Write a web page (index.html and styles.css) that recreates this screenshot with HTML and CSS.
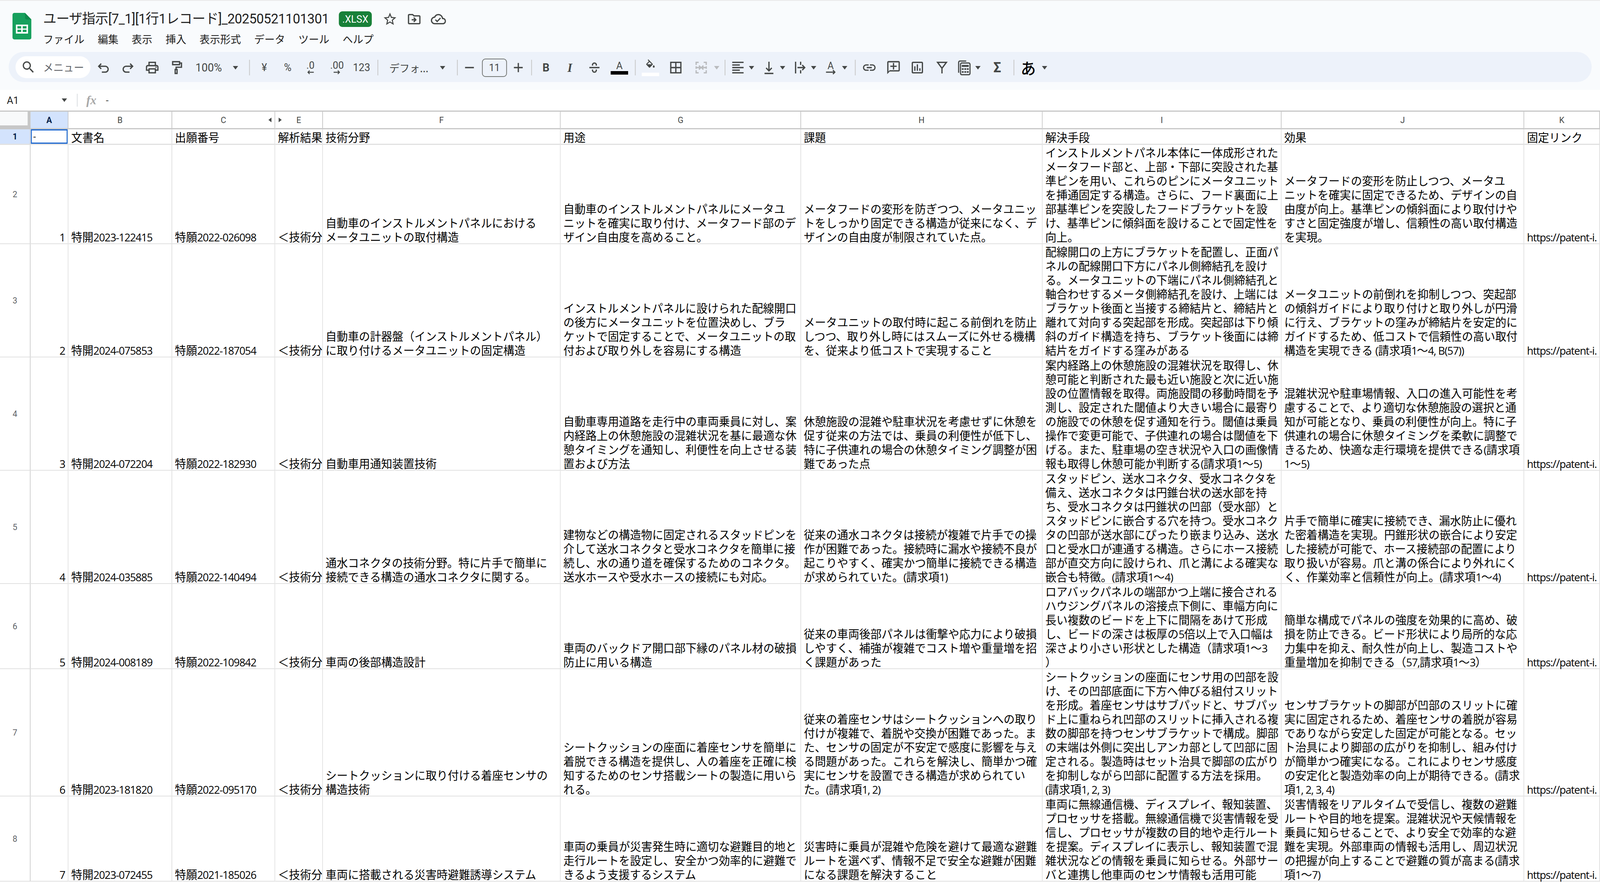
FILE: index.html
```html
<!DOCTYPE html>
<html lang="ja">
<head>
<meta charset="utf-8">
<title>ユーザ指示 - Sheets</title>
<link rel="stylesheet" href="styles.css">
</head>
<body>
<div class="app">
  <header class="head">
    <div class="top">
      <svg class="logo" viewBox="0 0 50 68"><path d="M5 0H33L50 17V63a5 5 0 0 1-5 5H5a5 5 0 0 1-5-5V5a5 5 0 0 1 5-5z" fill="#17a05d"/><path d="M33 0L50 17H38a5 5 0 0 1-5-5z" fill="#0f8a4c"/><path d="M9 30H41V53H9z" fill="#fff"/><path d="M13 34H23V40H13zM27 34H37V40H27zM13 43H23V49H13zM27 43H37V49H27z" fill="#17a05d"/></svg>
      <div class="titlecol">
        <div class="titlerow">
          <h1 class="title">ユーザ指示[7_1][1行1レコード]_20250521101301</h1>
          <span class="badge">.XLSX</span>
          <svg class="ic star" viewBox="0 0 24 24"><path d="M22 9.24l-7.19-.62L12 2 9.19 8.63 2 9.24l5.46 4.73L5.82 21 12 17.27 18.18 21l-1.63-7.03L22 9.24zM12 15.4l-3.76 2.27 1-4.28-3.32-2.88 4.38-.38L12 6.1l1.71 4.04 4.38.38-3.32 2.88 1 4.28L12 15.4z"/></svg>
          <svg class="ic mv" viewBox="0 0 24 24"><path d="M20 6h-8l-2-2H4c-1.1 0-2 .9-2 2v12c0 1.1.9 2 2 2h16c1.1 0 2-.9 2-2V8c0-1.1-.9-2-2-2zm0 12H4V6h5.17l2 2H20v10zM12.16 14l-1.6 1.59L12 17l4-4-4-4-1.42 1.41L12.16 12H8v2h4.16z"/></svg>
          <svg class="ic cl" viewBox="0 0 24 24"><path d="M19.35 10.04C18.67 6.59 15.64 4 12 4 9.11 4 6.6 5.64 5.35 8.04 2.34 8.36 0 10.91 0 14c0 3.31 2.69 6 6 6h13c2.76 0 5-2.24 5-5 0-2.64-2.05-4.78-4.65-4.96zM19 18H6c-2.21 0-4-1.79-4-4 0-2.05 1.53-3.76 3.56-3.97l1.07-.11.5-.95C8.08 7.14 9.94 6 12 6c2.62 0 4.88 1.86 5.39 4.43l.3 1.5 1.53.11c1.56.1 2.78 1.41 2.78 2.96 0 1.65-1.35 3-3 3zm-9-3.82l-2.09-2.09L6.5 13.5 10 17l6.01-6.01-1.41-1.41z"/></svg>
        </div>
        <nav class="menu"><span>ファイル</span><span>編集</span><span>表示</span><span>挿入</span><span>表示形式</span><span>データ</span><span>ツール</span><span>ヘルプ</span></nav>
      </div>
    </div>
    <div class="toolbar">
      <div class="search"><svg class="ic" viewBox="0 0 24 24"><path d="M15.5 14h-.79l-.28-.27C15.41 12.59 16 11.11 16 9.5 16 5.91 13.09 3 9.5 3S3 5.91 3 9.5 5.91 16 9.5 16c1.61 0 3.09-.59 4.23-1.57l.27.28v.79l5 4.99L20.49 19l-4.99-5zm-6 0C7.01 14 5 11.99 5 9.5S7.01 5 9.5 5 14 7.01 14 9.5 11.99 14 9.5 14z"/></svg><span>メニュー</span></div>
      <div class="b w64"><svg class="ic st" viewBox="0 0 24 24"><path d="M8 6L4 10l4 4M4 10h10.5a4.5 4.5 0 0 1 0 9H9"/></svg></div>
      <div class="b w62"><svg class="ic st" viewBox="0 0 24 24"><path d="M16 6l4 4-4 4M20 10H9.5a4.5 4.5 0 0 0 0 9H15"/></svg></div>
      <div class="b w68"><svg class="ic" viewBox="0 0 24 24"><path d="M19 8h-1V3H6v5H5c-1.66 0-3 1.34-3 3v6h4v4h12v-4h4v-6c0-1.66-1.34-3-3-3zM8 5h8v3H8V5zm8 12v2H8v-4h8v2zm2-2v-2H6v2H4v-4c0-.55.45-1 1-1h14c.55 0 1 .45 1 1v4h-2z"/><circle cx="18" cy="11.5" r="1"/></svg></div>
      <div class="b w60"><svg class="ic st" viewBox="0 0 24 24"><path d="M6 3h11v4.5H6zM17 5h3v6.5h-8.5V15M10 15h3v6h-3z"/></svg></div>
      <div class="zoomsel"><span>100%</span><i class="caret"></i></div>
      <i class="sep"></i>
      <div class="b w62 tx">¥</div>
      <div class="b w62 tx">%</div>
      <div class="b w58 dec"><span>.0</span><svg viewBox="0 0 20 10"><path d="M18 5H4M8 1L4 5l4 4"/></svg></div>
      <div class="b w82 dec"><span>.00</span><svg viewBox="0 0 20 10"><path d="M2 5h14M12 1l4 4-4 4"/></svg></div>
      <div class="b w48 tx tx123">123</div>
      <i class="sep"></i>
      <div class="fontsel"><span>デフォ...</span><i class="caret"></i></div>
      <i class="sep"></i>
      <div class="b w48"><svg class="ic st" viewBox="0 0 24 24"><path d="M5 12h14"/></svg></div>
      <div class="size">11</div>
      <div class="b w54 plus"><svg class="ic st" viewBox="0 0 24 24"><path d="M5 12h14M12 5v14"/></svg></div>
      <i class="sep"></i>
      <div class="b w60 lt-b">B</div>
      <div class="b w66 lt-i">I</div>
      <div class="b w64"><svg class="ic st" viewBox="0 0 24 24"><path d="M4 12h16M9 9V8a3 3 0 0 1 6 0v1M9 15v1a3 3 0 0 0 6 0v-1"/></svg></div>
      <div class="b w68 color"><span>A</span><i class="bar black"></i></div>
      <i class="sep"></i>
      <div class="b w64 color"><svg class="fillic" viewBox="0 0 24 24"><path d="M16.56 8.94L7.62 0 6.21 1.41l2.38 2.38-5.15 5.15c-.59.59-.59 1.54 0 2.12l5.5 5.5c.29.29.68.44 1.06.44s.77-.15 1.06-.44l5.5-5.5c.59-.58.59-1.53 0-2.12zM5.21 10L10 5.21 14.79 10H5.21zM19 11.5s-2 2.17-2 3.5c0 1.1.9 2 2 2s2-.9 2-2c0-1.33-2-3.5-2-3.5z"/></svg><i class="bar white"></i></div>
      <div class="b w70"><svg class="ic" viewBox="0 0 24 24"><path d="M3 3v18h18V3H3zm8 16H5v-6h6v6zm0-8H5V5h6v6zm8 8h-6v-6h6v6zm0-8h-6V5h6v6z"/></svg></div>
      <div class="b w64"><svg class="ic st off" viewBox="0 0 24 24"><path d="M8 4H4v4M4 10v4M4 16v4h4M16 4h4v4M20 10v4M20 16v4h-4M5 12h6M8.5 9l3 3-3 3M19 12h-6M15.5 9l-3 3 3 3"/></svg></div>
      <div class="b w23"><i class="caret off"></i></div>
      <i class="sep"></i>
      <div class="drop"><span class="dico"><svg class="ic" viewBox="0 0 24 24"><path d="M15 15H3v2h12v-2zm0-8H3v2h12V7zM3 13h18v-2H3v2zm0 8h18v-2H3v2zM3 3v2h18V3H3z"/></svg></span><i class="caret"></i></div>
      <div class="drop"><span class="dico"><svg class="ic st" viewBox="0 0 24 24"><path d="M12 3v14M7.5 12.5L12 17l4.500-4.500M5 21h14"/></svg></span><i class="caret"></i></div>
      <div class="drop"><span class="dico"><svg class="ic st" viewBox="0 0 24 24"><path d="M5 3v18M13 3v5M13 16v5M8 12h11M15.500 8l4 4-4 4"/></svg></span><i class="caret"></i></div>
      <div class="drop"><span class="dico"><svg class="ic" viewBox="0 0 24 24"><text x="6.500" y="14.500" class="rot">A</text><path class="arrow" d="M4 19h14M15 16l3 3-3 3"/></svg></span><i class="caret"></i></div>
      <i class="sep"></i>
      <div class="b w58"><svg class="ic" viewBox="0 0 24 24"><path d="M3.900 12c0-1.710 1.390-3.100 3.100-3.100h4V7H7c-2.760 0-5 2.240-5 5s2.240 5 5 5h4v-1.900H7c-1.710 0-3.100-1.390-3.100-3.100zM8 13h8v-2H8v2zm9-6h-4v1.900h4c1.710 0 3.100 1.390 3.100 3.100s-1.390 3.100-3.100 3.100h-4V17h4c2.760 0 5-2.240 5-5s-2.240-5-5-5z"/></svg></div>
      <div class="b w70"><svg class="ic" viewBox="0 0 24 24"><path d="M20 2H4c-1.100 0-2 .9-2 2v18l4-4h14c1.100 0 2-.9 2-2V4c0-1.100-.9-2-2-2zm0 14H6l-2 2V4h16v12z"/><path d="M13 5h-2v4H7v2h4v4h2v-4h4V9h-4z"/></svg></div>
      <div class="b w56"><svg class="ic" viewBox="0 0 24 24"><path d="M19 3H5c-1.100 0-2 .9-2 2v14c0 1.100.9 2 2 2h14c1.100 0 2-.9 2-2V5c0-1.100-.9-2-2-2zm0 16H5V5h14v14zM7 10h2v7H7zM11 7h2v10h-2zM15 13h2v4h-2z"/></svg></div>
      <div class="b w66 filt"><svg class="ic st" viewBox="0 0 24 24"><path d="M5 4h14l-7 9zM12 13v8"/></svg></div>
      <div class="drop"><span class="dico"><svg class="ic" viewBox="0 0 24 24"><path class="calc" d="M3 20V4a2 2 0 0 1 2-2h10"/><rect class="calc" x="6" y="5" width="15" height="18" rx="2"/><path d="M8 8h11v3H8zM8 13h3v2.500H8zM12 13h3v2.500h-3zM16 13h3v2.500h-3zM8 17.500h3V20H8zM12 17.500h3V20h-3zM16 17.500h3V20h-3z"/></svg></span><i class="caret"></i></div>
      <div class="b w62 sigma">Σ</div>
      <i class="sep"></i>
      <div class="b w60 kana">あ</div>
      <div class="b w26"><i class="caret"></i></div>
    </div>
  </header>
  <div class="fbar">
    <div class="namebox"><span>A1</span><i class="caret"></i></div>
    <i class="fsep"></i>
    <span class="fx">fx</span>
    <span class="fval">-</span>
  </div>
  <div class="grid">
    <table class="sheet">
      <colgroup><col class="ch"><col class="ca"><col class="cb"><col class="cc"><col class="ce"><col class="cf"><col class="cg"><col class="ch2"><col class="ci"><col class="cj"><col class="ck"></colgroup>
      <thead>
        <tr>
          <th class="corner"></th><th class="sel">A</th><th>B</th><th class="rel">C<i class="hide-l"></i></th><th class="rel"><i class="hide-r"></i>E</th><th>F</th><th>G</th><th>H</th><th>I</th><th>J</th><th>K</th>
        </tr>
      </thead>
      <tbody>
        <tr class="r1"><th class="rh rsel">1</th><td class="active">-</td><td>文書名</td><td>出願番号</td><td>解析結果</td><td>技術分野</td><td>用途</td><td>課題</td><td>解決手段</td><td>効果</td><td>固定リンク</td></tr>
        <tr><th class="rh">2</th><td class="n"><span class="lat">1</span></td><td>特開<span class="lat">2023-122415</span></td><td>特願<span class="lat">2022-026098</span></td><td>＜技術分</td>
          <td>自動車のインストルメントパネルにおける<br>メータユニットの取付構造</td>
          <td>自動車のインストルメントパネルにメータユ<br>ニットを確実に取り付け、メータフード部のデ<br>ザイン自由度を高めること。</td>
          <td>メータフードの変形を防ぎつつ、メータユニッ<br>トをしっかり固定できる構造が従来になく、デ<br>ザインの自由度が制限されていた点。</td>
          <td>インストルメントパネル本体に一体成形された<br>メータフード部と、上部・下部に突設された基<br>準ピンを用い、これらのピンにメータユニット<br>を挿通固定する構造。さらに、フード裏面に上<br>部基準ピンを突設したフードブラケットを設<br>け、基準ピンに傾斜面を設けることで固定性を<br>向上。</td>
          <td>メータフードの変形を防止しつつ、メータユ<br>ニットを確実に固定できるため、デザインの自<br>由度が向上。基準ピンの傾斜面により取付けや<br>すさと固定強度が増し、信頼性の高い取付構造<br>を実現。</td>
          <td class="url"><span class="lat">https://patent-i.</span></td></tr>
        <tr><th class="rh">3</th><td class="n"><span class="lat">2</span></td><td>特開<span class="lat">2024-075853</span></td><td>特願<span class="lat">2022-187054</span></td><td>＜技術分</td>
          <td>自動車の計器盤（インストルメントパネル）<br>に取り付けるメータユニットの固定構造</td>
          <td>インストルメントパネルに設けられた配線開口<br>の後方にメータユニットを位置決めし、ブラ<br>ケットで固定することで、メータユニットの取<br>付および取り外しを容易にする構造</td>
          <td>メータユニットの取付時に起こる前倒れを防止<br>しつつ、取り外し時にはスムーズに外せる機構<br>を、従来より低コストで実現すること</td>
          <td>配線開口の上方にブラケットを配置し、正面パ<br>ネルの配線開口下方にパネル側締結孔を設け<br>る。メータユニットの下端にパネル側締結孔と<br>軸合わせするメータ側締結孔を設け、上端には<br>ブラケット後面と当接する締結片と、締結片と<br>離れて対向する突起部を形成。突起部は下り傾<br>斜のガイド構造を持ち、ブラケット後面には締<br>結片をガイドする窪みがある</td>
          <td>メータユニットの前倒れを抑制しつつ、突起部<br>の傾斜ガイドにより取り付けと取り外しが円滑<br>に行え、ブラケットの窪みが締結片を安定的に<br>ガイドするため、低コストで信頼性の高い取付<br>構造を実現できる <span class="lat">(</span>請求項<span class="lat">1</span>〜<span class="lat">4, B(57))</span></td>
          <td class="url"><span class="lat">https://patent-i.</span></td></tr>
        <tr><th class="rh">4</th><td class="n"><span class="lat">3</span></td><td>特開<span class="lat">2024-072204</span></td><td>特願<span class="lat">2022-182930</span></td><td>＜技術分</td>
          <td>自動車用通知装置技術</td>
          <td>自動車専用道路を走行中の車両乗員に対し、案<br>内経路上の休憩施設の混雑状況を基に最適な休<br>憩タイミングを通知し、利便性を向上させる装<br>置および方法</td>
          <td>休憩施設の混雑や駐車状況を考慮せずに休憩を<br>促す従来の方法では、乗員の利便性が低下し、<br>特に子供連れの場合の休憩タイミング調整が困<br>難であった点</td>
          <td>案内経路上の休憩施設の混雑状況を取得し、休<br>憩可能と判断された最も近い施設と次に近い施<br>設の位置情報を取得。両施設間の移動時間を予<br>測し、設定された閾値より大きい場合に最寄り<br>の施設での休憩を促す通知を行う。閾値は乗員<br>操作で変更可能で、子供連れの場合は閾値を下<br>げる。また、駐車場の空き状況や入口の画像情<br>報も取得し休憩可能か判断する<span class="lat">(</span>請求項<span class="lat">1</span>〜<span class="lat">5)</span></td>
          <td>混雑状況や駐車場情報、入口の進入可能性を考<br>慮することで、より適切な休憩施設の選択と通<br>知が可能となり、乗員の利便性が向上。特に子<br>供連れの場合に休憩タイミングを柔軟に調整で<br>きるため、快適な走行環境を提供できる<span class="lat">(</span>請求項<br><span class="lat">1</span>〜<span class="lat">5)</span></td>
          <td class="url"><span class="lat">https://patent-i.</span></td></tr>
        <tr><th class="rh">5</th><td class="n"><span class="lat">4</span></td><td>特開<span class="lat">2024-035885</span></td><td>特願<span class="lat">2022-140494</span></td><td>＜技術分</td>
          <td>通水コネクタの技術分野。特に片手で簡単に<br>接続できる構造の通水コネクタに関する。</td>
          <td>建物などの構造物に固定されるスタッドピンを<br>介して送水コネクタと受水コネクタを簡単に接<br>続し、水の通り道を確保するためのコネクタ。<br>送水ホースや受水ホースの接続にも対応。</td>
          <td>従来の通水コネクタは接続が複雑で片手での操<br>作が困難であった。接続時に漏水や接続不良が<br>起こりやすく、確実かつ簡単に接続できる構造<br>が求められていた。<span class="lat">(</span>請求項<span class="lat">1)</span></td>
          <td>スタッドピン、送水コネクタ、受水コネクタを<br>備え、送水コネクタは円錐台状の送水部を持<br>ち、受水コネクタは円錐状の凹部（受水部）と<br>スタッドピンに嵌合する穴を持つ。受水コネク<br>タの凹部が送水部にぴったり嵌まり込み、送水<br>口と受水口が連通する構造。さらにホース接続<br>部が直交方向に設けられ、爪と溝による確実な<br>嵌合も特徴。<span class="lat">(</span>請求項<span class="lat">1</span>〜<span class="lat">4)</span></td>
          <td>片手で簡単に確実に接続でき、漏水防止に優れ<br>た密着構造を実現。円錐形状の嵌合により安定<br>した接続が可能で、ホース接続部の配置により<br>取り扱いが容易。爪と溝の係合により外れにく<br>く、作業効率と信頼性が向上。<span class="lat">(</span>請求項<span class="lat">1</span>〜<span class="lat">4)</span></td>
          <td class="url"><span class="lat">https://patent-i.</span></td></tr>
        <tr><th class="rh">6</th><td class="n"><span class="lat">5</span></td><td>特開<span class="lat">2024-008189</span></td><td>特願<span class="lat">2022-109842</span></td><td>＜技術分</td>
          <td>車両の後部構造設計</td>
          <td>車両のバックドア開口部下縁のパネル材の破損<br>防止に用いる構造</td>
          <td>従来の車両後部パネルは衝撃や応力により破損<br>しやすく、補強が複雑でコスト増や重量増を招<br>く課題があった</td>
          <td>ロアバックパネルの端部かつ上端に接合される<br>ハウジングパネルの溶接点下側に、車幅方向に<br>長い複数のビードを上下に間隔をあけて形成<br>し、ビードの深さは板厚の<span class="lat">5</span>倍以上で入口幅は<br>深さより小さい形状とした構造（請求項<span class="lat">1</span>〜<span class="lat">3</span><br>）</td>
          <td>簡単な構成でパネルの強度を効果的に高め、破<br>損を防止できる。ビード形状により局所的な応<br>力集中を抑え、耐久性が向上し、製造コストや<br>重量増加を抑制できる（<span class="lat">57,</span>請求項<span class="lat">1</span>〜<span class="lat">3</span>）</td>
          <td class="url"><span class="lat">https://patent-i.</span></td></tr>
        <tr><th class="rh">7</th><td class="n"><span class="lat">6</span></td><td>特開<span class="lat">2023-181820</span></td><td>特願<span class="lat">2022-095170</span></td><td>＜技術分</td>
          <td>シートクッションに取り付ける着座センサの<br>構造技術</td>
          <td>シートクッションの座面に着座センサを簡単に<br>着脱できる構造を提供し、人の着座を正確に検<br>知するためのセンサ搭載シートの製造に用いら<br>れる。</td>
          <td>従来の着座センサはシートクッションへの取り<br>付けが複雑で、着脱や交換が困難であった。ま<br>た、センサの固定が不安定で感度に影響を与え<br>る問題があった。これらを解決し、簡単かつ確<br>実にセンサを設置できる構造が求められてい<br>た。<span class="lat">(</span>請求項<span class="lat">1, 2)</span></td>
          <td>シートクッションの座面にセンサ用の凹部を設<br>け、その凹部底面に下方へ伸びる組付スリット<br>を形成。着座センサはサブパッドと、サブパッ<br>ド上に重ねられ凹部のスリットに挿入される複<br>数の脚部を持つセンサブラケットで構成。脚部<br>の末端は外側に突出しアンカ部として凹部に固<br>定される。製造時はセット治具で脚部の広がり<br>を抑制しながら凹部に配置する方法を採用。<br><span class="lat">(</span>請求項<span class="lat">1, 2, 3)</span></td>
          <td>センサブラケットの脚部が凹部のスリットに確<br>実に固定されるため、着座センサの着脱が容易<br>でありながら安定した固定が可能となる。セッ<br>ト治具により脚部の広がりを抑制し、組み付け<br>が簡単かつ確実になる。これによりセンサ感度<br>の安定化と製造効率の向上が期待できる。<span class="lat">(</span>請求<br>項<span class="lat">1, 2, 3, 4)</span></td>
          <td class="url"><span class="lat">https://patent-i.</span></td></tr>
        <tr><th class="rh">8</th><td class="n"><span class="lat">7</span></td><td>特開<span class="lat">2023-072455</span></td><td>特願<span class="lat">2021-185026</span></td><td>＜技術分</td>
          <td>車両に搭載される災害時避難誘導システム</td>
          <td>車両の乗員が災害発生時に適切な避難目的地と<br>走行ルートを設定し、安全かつ効率的に避難で<br>きるよう支援するシステム</td>
          <td>災害時に乗員が混雑や危険を避けて最適な避難<br>ルートを選べず、情報不足で安全な避難が困難<br>になる課題を解決すること</td>
          <td>車両に無線通信機、ディスプレイ、報知装置、<br>プロセッサを搭載。無線通信機で災害情報を受<br>信し、プロセッサが複数の目的地や走行ルート<br>を提案。ディスプレイに表示し、報知装置で混<br>雑状況などの情報を乗員に知らせる。外部サー<br>バと連携し他車両のセンサ情報も活用可能</td>
          <td>災害情報をリアルタイムで受信し、複数の避難<br>ルートや目的地を提案。混雑状況や天候情報を<br>乗員に知らせることで、より安全で効率的な避<br>難を実現。外部車両の情報も活用し、周辺状況<br>の把握が向上することで避難の質が高まる<span class="lat">(</span>請求<br>項<span class="lat">1</span>〜<span class="lat">7)</span></td>
          <td class="url"><span class="lat">https://patent-i.</span></td></tr>
      </tbody>
    </table>
  </div>
</div>
<script src="fit.js"></script>
</body>
</html>
```
FILE: styles.css
```css
* { box-sizing: border-box; }
html, body { margin: 0; padding: 0; background: #fff; overflow: hidden; }
body { font-family: "Noto Sans CJK JP", sans-serif; color: #000; }
.app { width: 4226px; height: 2258px; overflow: hidden; background: #fff; transform: scaleX(var(--fit, 1)); transform-origin: 0 0; }

.head { height: 230px; background: #f9fbfd; border-top: 2px solid #e9e9e9; }
.top { display: flex; height: 131px; padding-left: 33px; }
.logo { width: 50px; height: 68px; margin-top: 31px; flex: none; }
.titlecol { margin-left: 31px; }
.titlerow { display: flex; align-items: center; height: 40px; margin-top: 27px; }
.title { margin: 0; font: 400 35px/40px Roboto, "Noto Sans CJK JP", sans-serif; letter-spacing: -0.5px; color: #1f1f1f; white-space: nowrap; }
.badge { margin-left: 26px; width: 87px; height: 40px; background: #188038; color: #fff; border-radius: 9px; font: 400 26px/40px Roboto, sans-serif; text-align: center; }
.star { margin-left: 28px; }
.mv, .cl { margin-left: 24px; }
.ic { width: 40px; height: 40px; fill: #444746; flex: none; }
.st { fill: none; stroke: #444746; stroke-width: 2; }
.off { stroke: #b9bbbe; }
.menu { display: flex; gap: 35px; margin-top: 12px; font-size: 27.300px; line-height: 36px; color: #1f1f1f; }

.toolbar { display: flex; align-items: center; height: 77px; margin: 0 22px 0 23px; padding: 3px 0 0 18px; background: #edf2fa; border-radius: 38px; color: #444746; }
.search { width: 198px; height: 56px; margin-right: 3px; flex: none; background: #fff; border-radius: 28px; display: flex; align-items: center; padding-left: 14px; margin-top: -3px; font-size: 27px; color: #5f6368; gap: 19px; }
.search span { white-space: nowrap; }
.b { display: flex; align-items: center; justify-content: center; flex: none; height: 60px; }
.w23 { width: 23px; justify-content: flex-start; padding-left: 2px; }
.w26 { width: 26px; }
.w48 { width: 48px; }
.w54 { width: 54px; }
.w56 { width: 56px; }
.w58 { width: 58px; }
.w60 { width: 60px; }
.w62 { width: 62px; }
.w64 { width: 64px; }
.w66 { width: 66px; }
.w68 { width: 68px; }
.w70 { width: 70px; }
.w82 { width: 82px; }
.plus { margin-left: 3px; }
.filt { margin-left: 4px; }
.sigma { margin-right: 5px; font: 700 36px Roboto, sans-serif; }
.tx { font: 400 27px Roboto, sans-serif; }
.tx123 { margin-right: 11px; }
.dec { flex-direction: column; font: 400 26px/24px Roboto, sans-serif; }
.dec svg { width: 22px; height: 12px; fill: none; stroke: #444746; stroke-width: 2.200; }
.caret { display: block; width: 0; height: 0; flex: none; border-left: 7px solid transparent; border-right: 7px solid transparent; border-top: 9px solid #444746; }
.caret.off { border-top-color: #b9bbbe; }
.sep { display: block; flex: none; width: 2px; height: 40px; margin: 0 7px; background: #c7c7c7; }
.zoomsel { width: 153px; padding-left: 18px; margin-left: 2px; display: flex; align-items: center; flex: none; font: 400 29px Roboto, sans-serif; }
.zoomsel .caret { margin-left: 29px; }
.fontsel { width: 194px; padding-left: 22px; display: flex; align-items: center; flex: none; font-size: 27px; white-space: nowrap; }
.fontsel .caret { margin-left: 30px; }
.size { width: 66px; height: 47px; margin-left: 9px; flex: none; border: 2px solid #747775; border-radius: 9px; text-align: center; font: 400 26px/43px Roboto, sans-serif; }
.lt-b { font: 700 29px Roboto, sans-serif; }
.lt-i { font: italic 700 32px "Liberation Serif", serif; }
.color { flex-direction: column; font: 400 26px/27px Roboto, sans-serif; }
.bar { display: block; width: 46px; height: 9px; }
.black { background: #000; }
.white { background: #fff; }
.fillic { width: 30px; height: 30px; fill: #444746; margin-bottom: 4px; }
.drop { width: 82px; display: flex; align-items: center; flex: none; }
.dico { width: 52px; display: flex; justify-content: center; }
.drop .caret { margin-left: 3px; }
.rot { font: 400 15px Roboto, sans-serif; fill: #444746; }
.arrow { fill: none; stroke: #444746; stroke-width: 1.800; }
.calc { fill: none; stroke: #444746; stroke-width: 1.800; }
.kana { font: 500 40px "Noto Sans CJK JP", sans-serif; color: #000; }

.fbar { display: flex; align-items: center; height: 53px; background: #fff; }
.namebox { width: 203px; display: flex; align-items: center; justify-content: space-between; padding: 0 26px 0 18px; font: 400 26px Roboto, sans-serif; color: #1f1f1f; }
.fsep { display: block; width: 2px; height: 33px; background: #dadce0; }
.fx { margin-left: 23px; font: italic 700 32px "Liberation Serif", serif; color: #a8a8a8; }
.fval { margin-left: 25px; font: 400 26px Roboto, sans-serif; color: #444746; }

.grid { border-top: 3px solid #c7c7c7; }
.sheet { border-collapse: separate; border-spacing: 0; table-layout: fixed; width: 4226px; }
.ch { width: 81px; }
.ca { width: 100px; }
.cb { width: 274px; }
.cc { width: 272px; }
.ce { width: 126px; }
.cf { width: 628px; }
.cg { width: 635px; }
.ch2 { width: 638px; }
.ci { width: 631px; }
.cj { width: 641px; }
.ck { width: 200px; }
thead th { height: 45px; padding: 0; background: #fff; border-right: 2px solid #c7c7c7; border-bottom: 3px solid #c7c7c7; font: 400 22px Roboto, sans-serif; color: #444746; }
thead th.sel { background: #d3e3fd; color: #041e49; font-weight: 700; }
thead th.corner { background: #f8f9fa; border-right: 8px solid #c7c7c7; border-bottom: 10px solid #c7c7c7; }
.rel { position: relative; }
.hide-l { position: absolute; right: 8px; top: 15px; width: 0; height: 0; border-top: 6px solid transparent; border-bottom: 6px solid transparent; border-right: 8px solid #444746; }
.hide-r { position: absolute; left: 9px; top: 15px; width: 0; height: 0; border-top: 6px solid transparent; border-bottom: 6px solid transparent; border-left: 8px solid #444746; }
.rh { padding: 0; background: #fff; border-right: 2px solid #c7c7c7; border-bottom: 2px solid #e1e1e1; font: 400 22px Roboto, sans-serif; color: #5f6368; }
.rsel { background: #d3e3fd; color: #041e49; font-weight: 700; }
td { padding: 0 7px; vertical-align: bottom; white-space: nowrap; font-size: 29.330px; line-height: 36px; border-right: 2px solid #e1e1e1; border-bottom: 2px solid #e1e1e1; background: #fff; color: #000; }
.r1 th, .r1 td { height: 40px; border-bottom-width: 3px; vertical-align: middle; line-height: 34px; }
.n { text-align: right; }
.lat { font-family: "Open Sans", sans-serif; font-size: 28px; letter-spacing: -1.2px; line-height: 1; }
td.url { padding-right: 0; }
td.active { box-shadow: inset 0 0 0 3px #1a66d0; font: 400 24px/34px Roboto, sans-serif; }
```
FILE: fit.js
```js
document.documentElement.style.setProperty('--fit', Math.min(1, window.innerWidth / 4226));
```
